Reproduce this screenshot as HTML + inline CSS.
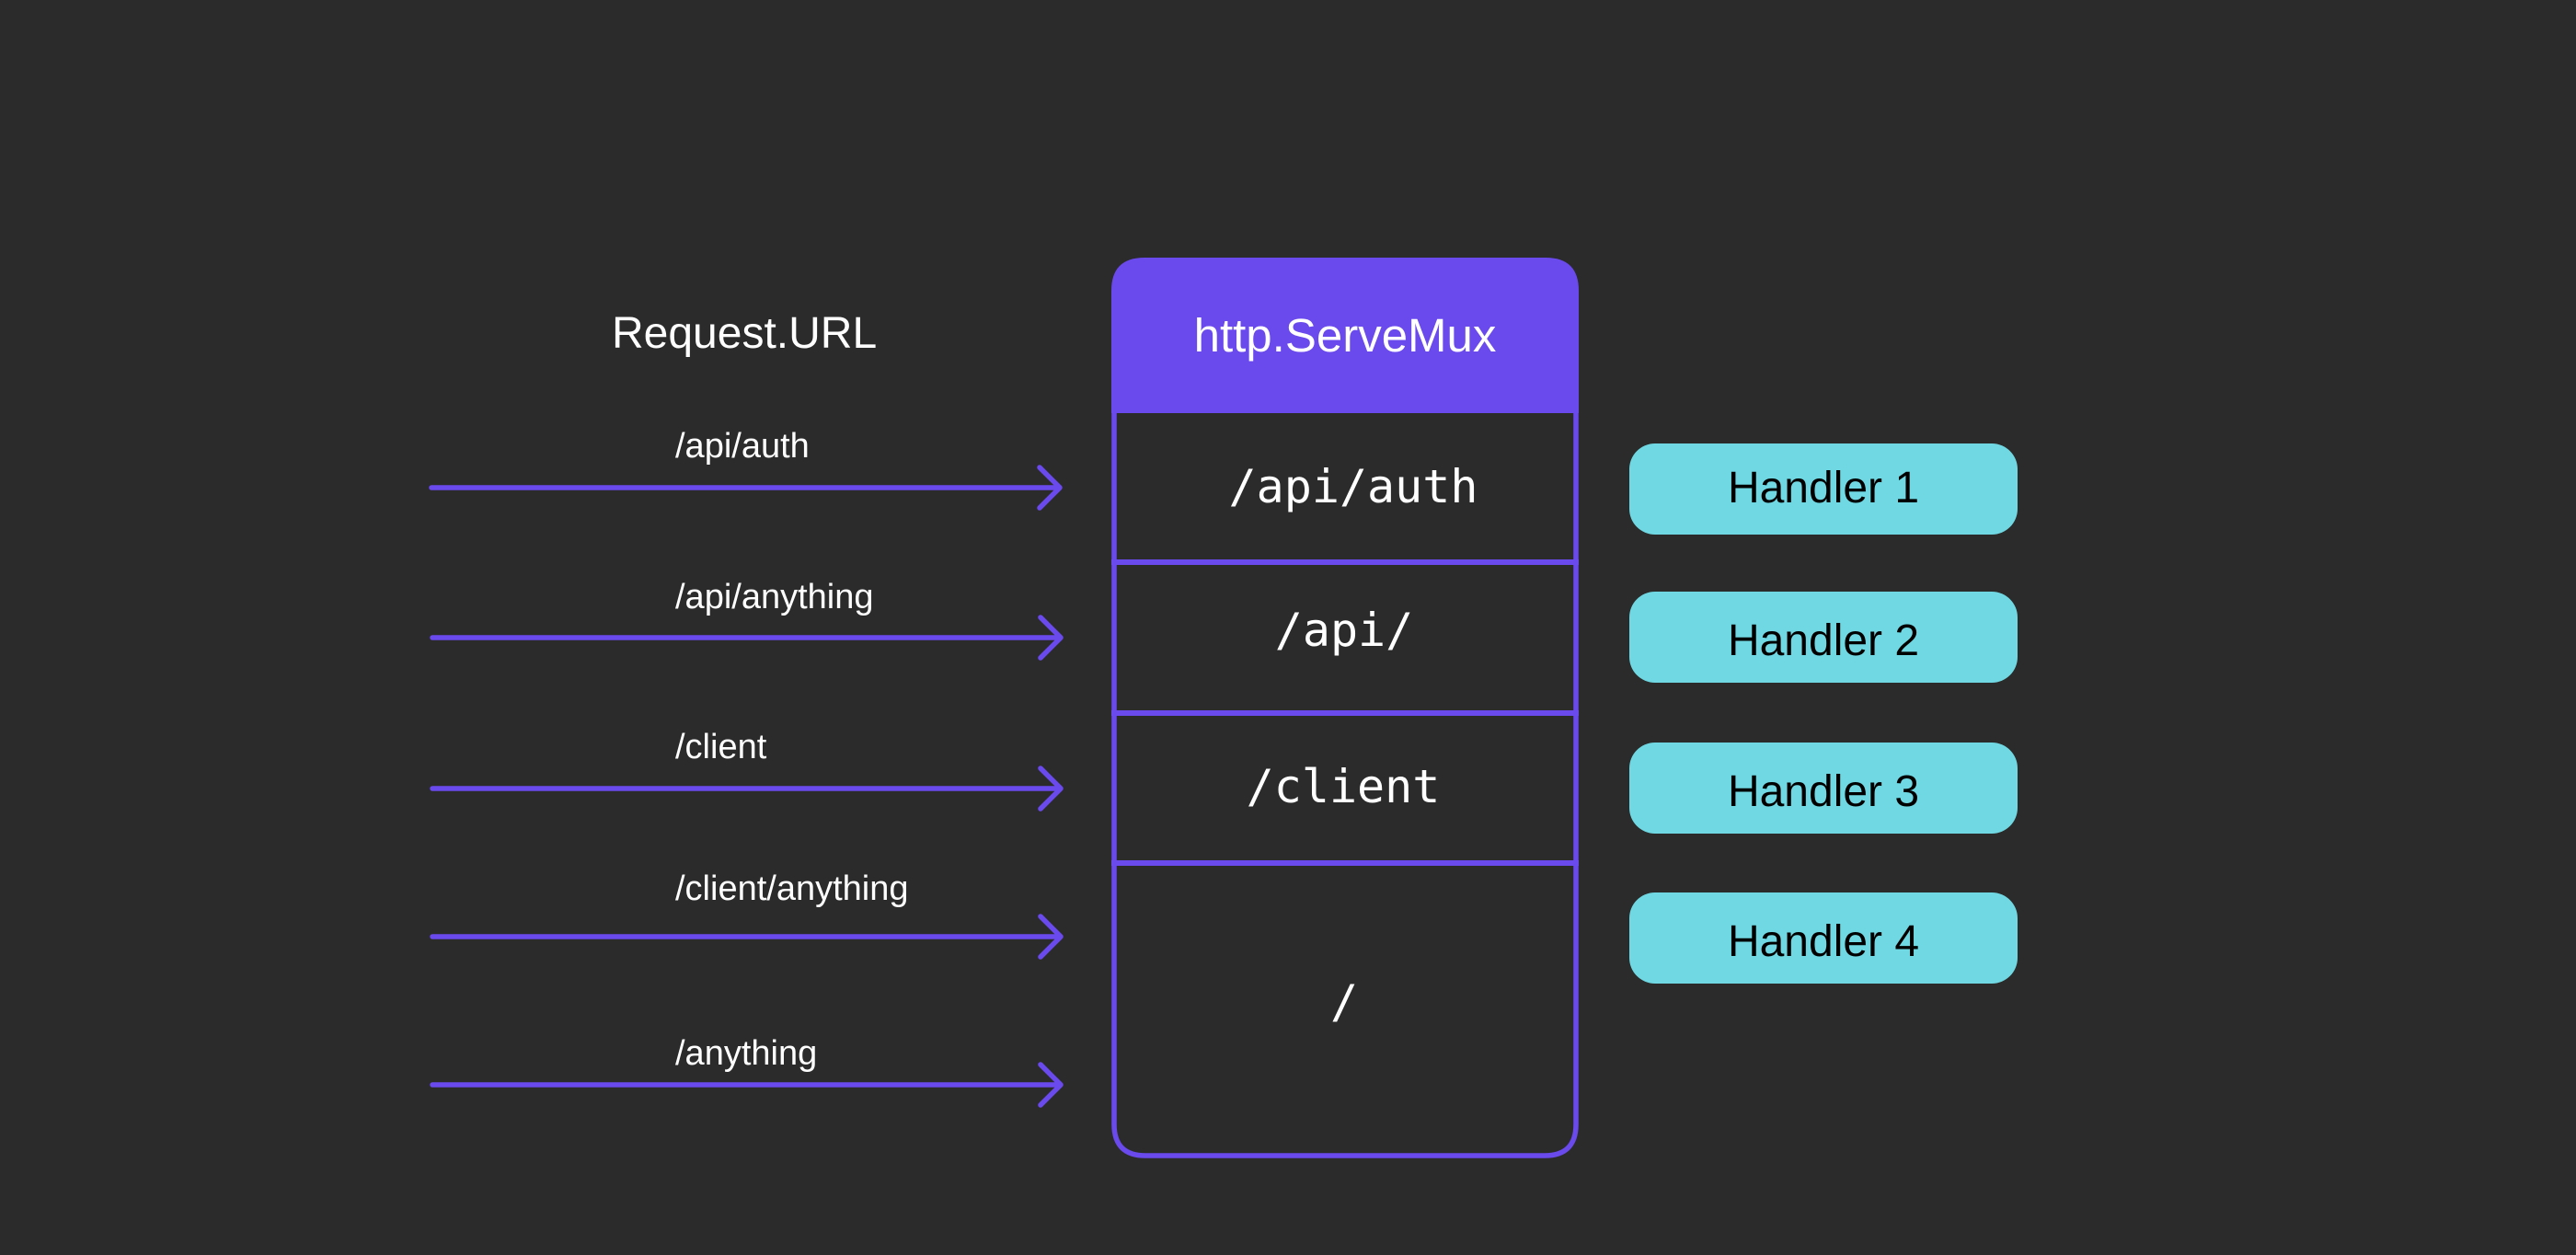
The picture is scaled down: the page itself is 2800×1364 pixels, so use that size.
<!DOCTYPE html>
<html><head><meta charset="utf-8">
<style>
html,body{margin:0;padding:0;background:#2b2b2b;}
body{width:2800px;height:1364px;position:relative;overflow:hidden;font-family:"Liberation Sans",sans-serif;}
.t{position:absolute;white-space:nowrap;}
.lbl{color:#fff;font-size:38px;left:734px;}
.mono{font-family:"DejaVu Sans Mono","Liberation Mono",monospace;font-size:50px;color:#fff;width:500px;text-align:center;left:1211px;}
.h{position:absolute;left:1771px;width:422px;height:99px;background:#6fd8e2;border-radius:28px;color:#000;font-size:48px;display:flex;align-items:center;justify-content:center;box-sizing:border-box;padding-top:7px;}
</style></head><body>
<svg width="2800" height="1364" style="position:absolute;left:0;top:0">
  <g stroke="#6a4aec" stroke-width="5.5" stroke-linecap="round" stroke-linejoin="round" fill="none">
    <path d="M469 530H1152M1130 508L1152 530L1130 552"/>
    <path d="M470 693H1153M1131 671L1153 693L1131 715"/>
    <path d="M470 857H1153M1131 835L1153 857L1131 879"/>
    <path d="M470 1018H1153M1131 996L1153 1018L1131 1040"/>
    <path d="M470 1179H1153M1131 1157L1153 1179L1131 1201"/>
  </g>
  <path d="M1208 316Q1208 280 1244 280H1680Q1716 280 1716 316V449H1208Z" fill="#6a4aec"/>
  <path d="M1211 449V1222Q1211 1256 1245 1256H1679Q1713 1256 1713 1222V449" fill="none" stroke="#6a4aec" stroke-width="5.5"/>
  <rect x="1208" y="608" width="508" height="6" fill="#6a4aec"/>
  <rect x="1208" y="772" width="508" height="6" fill="#6a4aec"/>
  <rect x="1208" y="935" width="508" height="6" fill="#6a4aec"/>
</svg>
<div class="t" style="left:665px;top:335px;font-size:48px;color:#fff;">Request.URL</div>
<div class="t" style="left:1208px;width:508px;text-align:center;top:335px;font-size:51px;color:#fff;">http.ServeMux</div>
<div class="t lbl" style="top:464px;">/api/auth</div>
<div class="t lbl" style="top:628px;">/api/anything</div>
<div class="t lbl" style="top:791px;">/client</div>
<div class="t lbl" style="top:945px;">/client/anything</div>
<div class="t lbl" style="top:1124px;">/anything</div>
<div class="t mono" style="top:500px;left:1221px;">/api/auth</div>
<div class="t mono" style="top:656px;">/api/</div>
<div class="t mono" style="top:826px;left:1210px;">/client</div>
<div class="t mono" style="top:1060px;left:1211px;">/</div>
<div class="h" style="top:482px;padding-top:0;padding-bottom:3px;">Handler 1</div>
<div class="h" style="top:643px;">Handler 2</div>
<div class="h" style="top:807px;">Handler 3</div>
<div class="h" style="top:970px;">Handler 4</div>
</body></html>
